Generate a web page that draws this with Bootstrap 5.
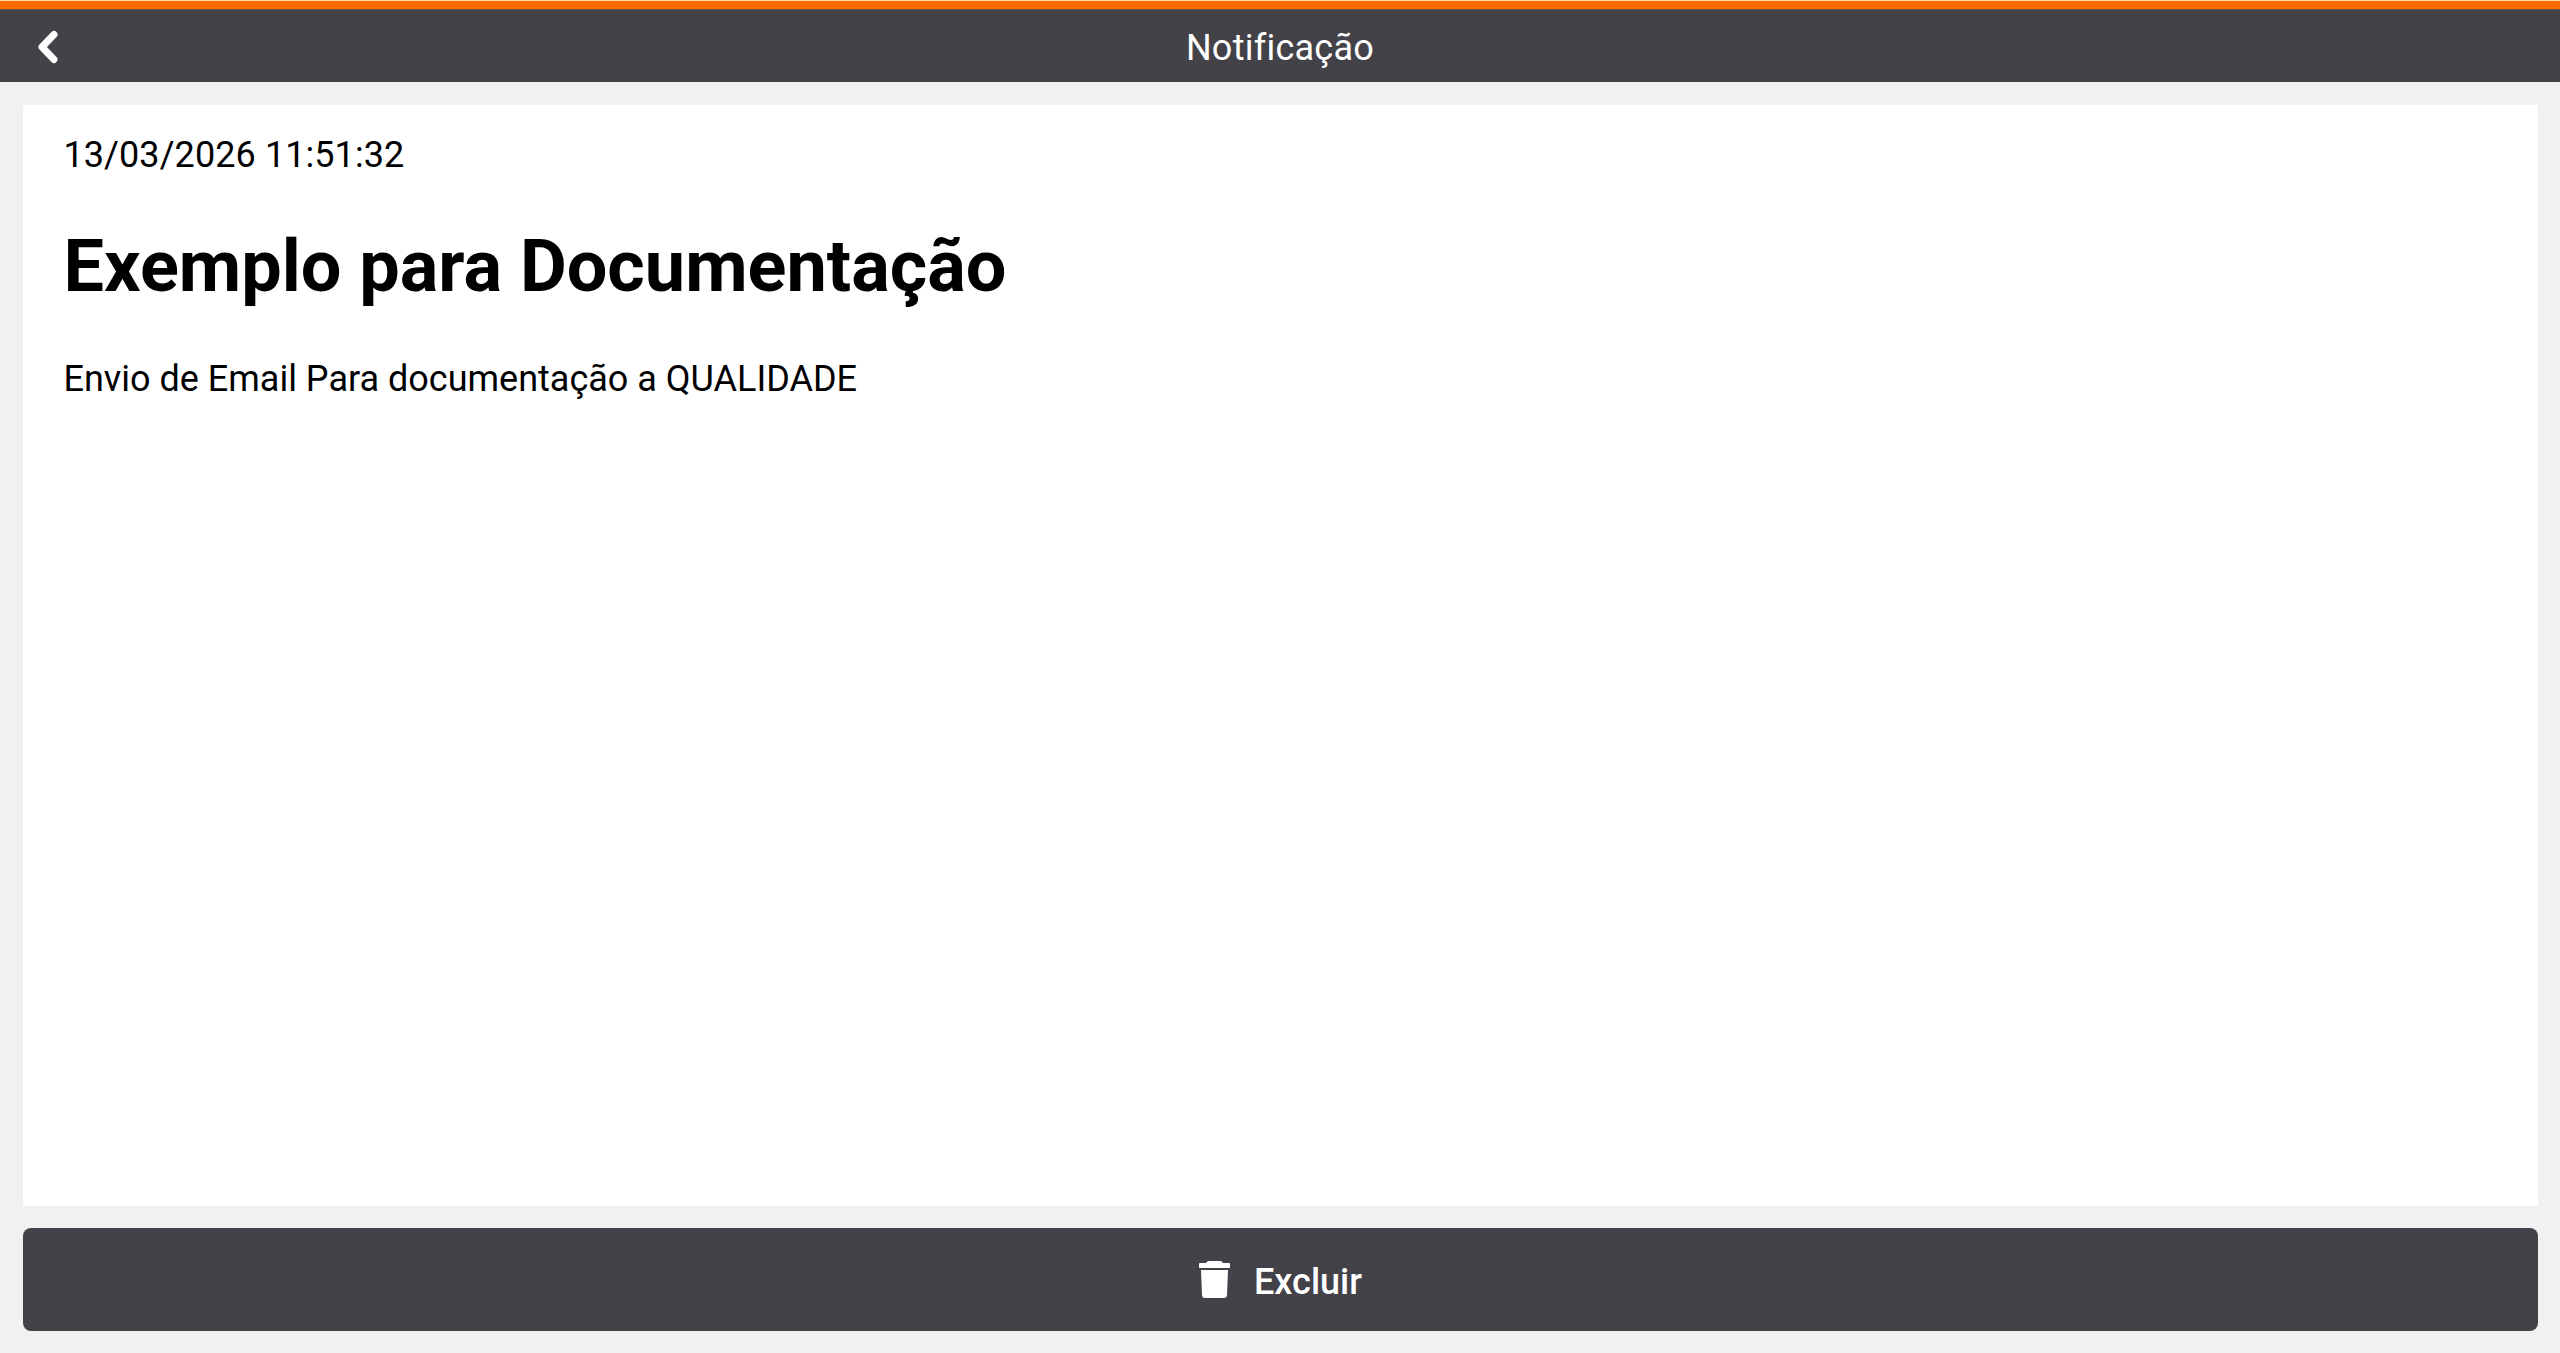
<!DOCTYPE html>
<html lang="pt-br">
<head>
    <meta charset="UTF-8">
    <meta name="viewport" content="width=device-width, initial-scale=1.0">
    <title>Notificação</title>
    <link href="https://cdn.jsdelivr.net/npm/bootstrap@5.3.0/dist/css/bootstrap.min.css" rel="stylesheet">
    <style>
        html, body { height: 100%; }
        body { background: #f1f1f1; font-family: Roboto, "Liberation Sans", sans-serif; color: #000; }
        .topo { height: 82px; padding-top: 14px; background: linear-gradient(#ffd6a6 0 1px, #ff6a00 1px 9px, #6e4f38 9px 10px, #434249 10px); color: #fff; font-size: 36px; letter-spacing: .25px; position: relative; }
        .topo-voltar { position: absolute; left: 35px; top: 28px; line-height: 0; padding: 0; border: 0; background: none; }
        .pagina { height: calc(100% - 82px); padding: 23px 22px 22px 23px; gap: 22px; }
        .conteudo { padding: 0 40.5px; }
        .conteudo-data { font-size: 36px; line-height: 48px; margin-top: 26px; letter-spacing: .08px; }
        .conteudo-titulo { font-size: 72px; font-weight: 700; line-height: 84px; margin: 46px 0 0; }
        .conteudo-texto { font-size: 36px; line-height: 48px; margin: 46px 0 0; }
        .btn-excluir { height: 103px; background: #434249; border: 0; border-radius: 8px; color: #fff; font-size: 36px; font-weight: 500; gap: 24px; }
        .btn-excluir:hover { background: #434249; color: #fff; }
        .btn-excluir span { padding-top: 5px; }
    </style>
</head>
<body>
    <div class="topo d-flex align-items-center justify-content-center">
        <button class="topo-voltar" type="button" aria-label="Voltar">
            <svg width="26" height="38" viewBox="0 0 26 38"><path d="M19 6.500 7 19l12 12.500" fill="none" stroke="#fff" stroke-width="7" stroke-linecap="round" stroke-linejoin="round"/></svg>
        </button>
        <span>Notificação</span>
    </div>

    <div class="pagina d-flex flex-column">
        <div class="conteudo bg-white flex-grow-1">
            <div class="conteudo-data">13/03/2026 11:51:32</div>
            <h1 class="conteudo-titulo">Exemplo para Documentação</h1>
            <p class="conteudo-texto">Envio de Email Para documentação a QUALIDADE</p>
        </div>
        <button type="button" class="btn btn-excluir d-flex align-items-center justify-content-center">
            <svg width="31" height="37" viewBox="0 0 31 37"><path fill="#fff" d="M7 2C8 .5 9 0 10 0h11c1 0 2 .5 3 2h6c.5 0 1 .5 1 1v3c0 .5-.5 1-1 1H1c-.5 0-1-.5-1-1V3c0-.5.5-1 1-1zM2 9h27l-1 25c-.1 1.800-1.200 3-3 3H6c-1.800 0-2.900-1.200-3-3z"/></svg>
            <span>Excluir</span>
        </button>
    </div>
</body>
</html>
